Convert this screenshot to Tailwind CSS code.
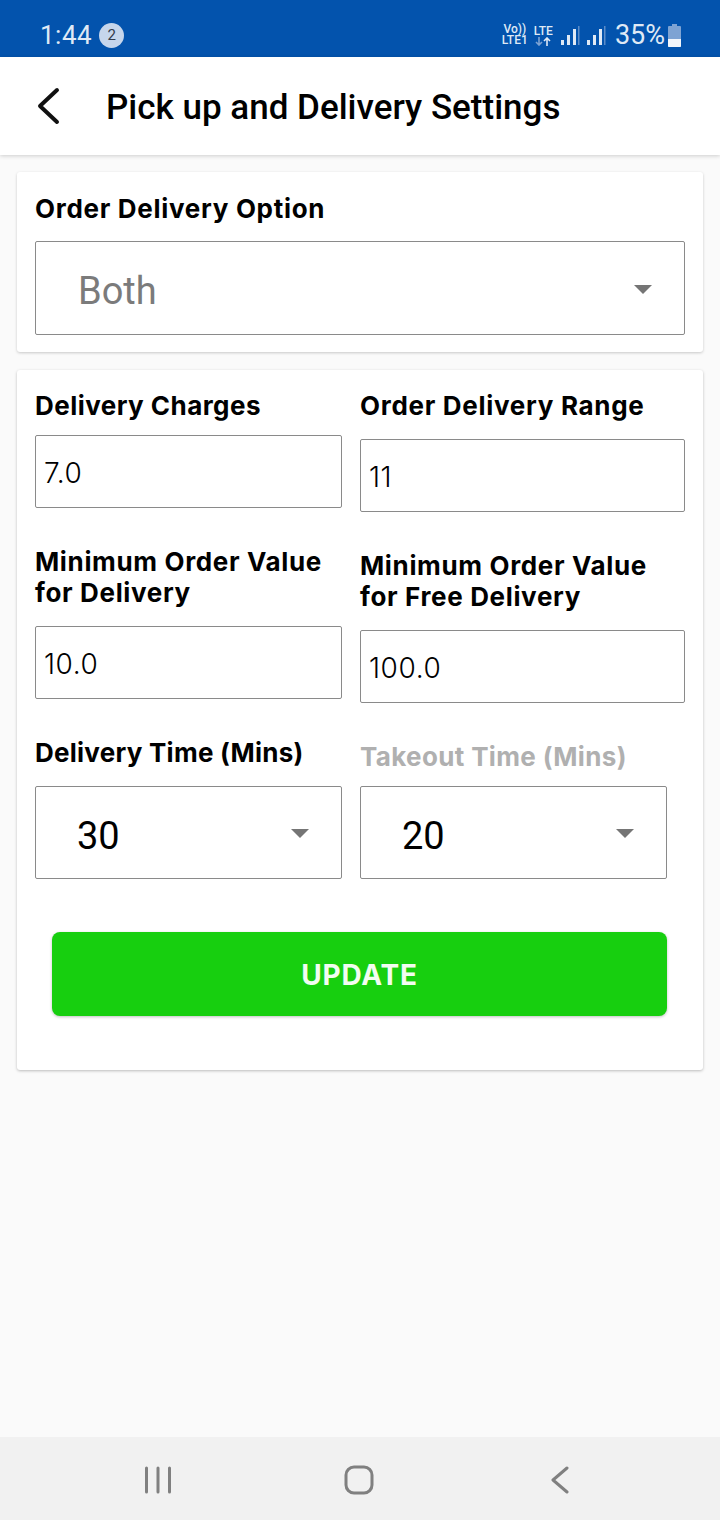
<!DOCTYPE html>
<html lang="en">
<head>
    <meta charset="utf-8" />
    <meta name="viewport" content="width=device-width, initial-scale=1" />
    <title>Pick up and Delivery Settings</title>
    <script src="https://cdn.jsdelivr.net/npm/@tailwindcss/browser@4"></script>
</head>
<body class="bg-[#fafafa] text-black font-['Roboto',sans-serif]">
<div class="relative flex h-[1520px] w-[720px] flex-col overflow-hidden">

    <!-- Status bar -->
    <div class="flex h-[57px] shrink-0 items-center justify-between bg-[#0353ad] pt-[13px] pl-[40px] pr-[38px] text-[#dfe9f5]">
        <div class="flex items-center gap-[7px]">
            <span class="text-[26px] leading-none tracking-[0.5px]">1:44</span>
            <span class="flex h-[25px] w-[25px] items-center justify-center rounded-full bg-[#c6d6ec] text-[15px] text-[#333c4d]">2</span>
        </div>
        <div class="flex items-center">
            <div class="flex flex-col items-center text-[12px] leading-[11px] font-medium">
                <span>Vo))</span>
                <span>LTE1</span>
            </div>
            <div class="ml-[6px] flex flex-col items-center text-[12px] leading-[12px] font-medium">
                <span>LTE</span>
                <svg width="16" height="9" viewBox="0 0 16 9" fill="none" stroke-width="1.6">
                    <path d="M4 0v8M1 5l3 3 3-3" stroke="#7ea3d3" />
                    <path d="M12 9V1M9 4l3-3 3 3" stroke="#dfe9f5" />
                </svg>
            </div>
            <svg class="ml-[7px]" width="46" height="22" viewBox="0 0 46 22" fill="#dfe9f5">
                <rect x="1" y="16" width="3" height="5" />
                <rect x="7" y="11" width="3" height="10" />
                <rect x="13" y="5" width="3" height="16" />
                <rect x="18" y="2" width="1.5" height="19" fill="#5c8cc8" />
                <rect x="27" y="16" width="3" height="5" />
                <rect x="33" y="11" width="3" height="10" />
                <rect x="39" y="5" width="3" height="16" />
                <rect x="44" y="2" width="1.5" height="19" fill="#5c8cc8" />
            </svg>
            <span class="ml-[9px] text-[27px] leading-none">35%</span>
            <svg class="ml-[2px]" width="15" height="23" viewBox="0 0 15 23">
                <path d="M5 0h5v2h3a1 1 0 0 1 1 1v19a1 1 0 0 1-1 1H2a1 1 0 0 1-1-1V3a1 1 0 0 1 1-1h3z" fill="#7ea3d3" />
                <path d="M1 15h13v7a1 1 0 0 1-1 1H2a1 1 0 0 1-1-1z" fill="#f2f6fb" />
            </svg>
        </div>
    </div>

    <!-- Header -->
    <header class="flex h-[98px] shrink-0 items-center bg-white pl-[36px] shadow-[0_1px_4px_rgba(0,0,0,0.18)]">
        <svg width="24" height="38" viewBox="0 0 24 38" fill="none" stroke="#111" stroke-width="4" stroke-linecap="round" stroke-linejoin="round">
            <path d="M21 3 4 19l17 16" />
        </svg>
        <h1 class="mt-[2px] ml-[46px] text-[35px] leading-none font-medium">Pick up and Delivery Settings</h1>
    </header>

    <main class="flex flex-col px-[17px] pt-[17px]">
        <!-- Order delivery option -->
        <section class="h-[180px] rounded-[3px] bg-white px-[18px] shadow-[0_1px_3px_rgba(0,0,0,0.2)]">
            <h2 class="pt-[21px] text-[26px] leading-[31px] font-bold font-['Inter',sans-serif] tracking-[0.7px]">Order Delivery Option</h2>
            <div class="mt-[17px] flex h-[94px] items-center justify-between rounded-[2px] border border-[#8a8a8a] pt-[2px] pr-[32px] pl-[42px]">
                <span class="mt-[4px] text-[38px] leading-none text-[#7b7b7b]">Both</span>
                <span class="h-0 w-0 border-x-[9px] border-t-[9px] border-x-transparent border-t-[#757575]"></span>
            </div>
        </section>

        <!-- Delivery settings -->
        <section class="mt-[18px] h-[700px] rounded-[3px] bg-white px-[18px] pt-[20px] shadow-[0_1px_3px_rgba(0,0,0,0.25)]">
            <div class="flex gap-[18px]">
                <div class="flex w-[307px] flex-col">
                    <h2 class="text-[26px] leading-[31px] font-bold font-['Inter',sans-serif] tracking-[0.45px]">Delivery Charges</h2>
                    <div class="mt-[14px] flex h-[73px] items-center rounded-[2px] border border-[#8a8a8a] pt-[3px] pl-[8px] text-[28px] font-light tracking-[0.6px] font-['Inter',sans-serif]">7.0</div>
                    <h2 class="mt-[38px] text-[26px] leading-[31px] font-bold font-['Inter',sans-serif] tracking-[0.65px]">Minimum Order Value<br />for Delivery</h2>
                    <div class="mt-[18px] flex h-[73px] items-center rounded-[2px] border border-[#8a8a8a] pt-[3px] pl-[8px] text-[28px] font-light tracking-[0.6px] font-['Inter',sans-serif]">10.0</div>
                    <h2 class="mt-[38px] text-[26px] leading-[31px] font-bold font-['Inter',sans-serif] tracking-[0.25px]">Delivery Time (Mins)</h2>
                    <div class="mt-[18px] flex h-[93px] items-center justify-between rounded-[2px] border border-[#8a8a8a] pt-[2px] pr-[32px] pl-[41px]">
                        <span class="mt-[4px] text-[38px] leading-none">30</span>
                        <span class="h-0 w-0 border-x-[9px] border-t-[9px] border-x-transparent border-t-[#757575]"></span>
                    </div>
                </div>
                <div class="flex w-[325px] flex-col">
                    <h2 class="text-[26px] leading-[31px] font-bold font-['Inter',sans-serif] tracking-[0.7px]">Order Delivery Range</h2>
                    <div class="mt-[18px] flex h-[73px] items-center rounded-[2px] border border-[#8a8a8a] pt-[3px] pl-[8px] text-[28px] font-light tracking-[0.6px] font-['Inter',sans-serif]">11</div>
                    <h2 class="mt-[38px] text-[26px] leading-[31px] font-bold font-['Inter',sans-serif] tracking-[0.65px]">Minimum Order Value<br />for Free Delivery</h2>
                    <div class="mt-[18px] flex h-[73px] items-center rounded-[2px] border border-[#8a8a8a] pt-[3px] pl-[8px] text-[28px] font-light tracking-[0.6px] font-['Inter',sans-serif]">100.0</div>
                    <h2 class="mt-[38px] text-[26px] leading-[31px] font-bold font-['Inter',sans-serif] tracking-[0.35px] text-[#b0b0b0]">Takeout Time (Mins)</h2>
                    <div class="mt-[14px] flex h-[93px] w-[307px] items-center justify-between rounded-[2px] border border-[#8a8a8a] pt-[2px] pr-[32px] pl-[41px]">
                        <span class="mt-[4px] text-[38px] leading-none">20</span>
                        <span class="h-0 w-0 border-x-[9px] border-t-[9px] border-x-transparent border-t-[#757575]"></span>
                    </div>
                </div>
            </div>
            <button class="mt-[53px] ml-[17px] flex h-[84px] w-[615px] items-center justify-center rounded-[8px] bg-[#17cf0f] pt-[2px] text-[28px] font-bold font-['Inter',sans-serif] tracking-[0.8px] text-[#f2fdf1] shadow-[0_1px_3px_rgba(0,0,0,0.25)]">UPDATE</button>
        </section>
    </main>

    <!-- Navigation bar -->
    <nav class="mt-auto flex h-[83px] shrink-0 items-center bg-[#f1f1f1] pb-[2px] text-[#808080]">
        <div class="relative h-full w-full">
            <svg class="absolute top-[29px] left-[144px]" width="28" height="28" viewBox="0 0 28 28" fill="none" stroke="currentColor" stroke-width="3" stroke-linecap="round">
                <path d="M2.500 2v24M14 2v24M25.500 2v24" />
            </svg>
            <svg class="absolute top-[28px] left-[344px]" width="30" height="30" viewBox="0 0 30 30" fill="none" stroke="currentColor" stroke-width="3">
                <rect x="2" y="2" width="26" height="26" rx="8" />
            </svg>
            <svg class="absolute top-[29px] left-[551px]" width="18" height="28" viewBox="0 0 18 28" fill="none" stroke="currentColor" stroke-width="3" stroke-linecap="round" stroke-linejoin="round">
                <path d="M16 2 2 14l14 12" />
            </svg>
        </div>
    </nav>
</div>
</body>
</html>
